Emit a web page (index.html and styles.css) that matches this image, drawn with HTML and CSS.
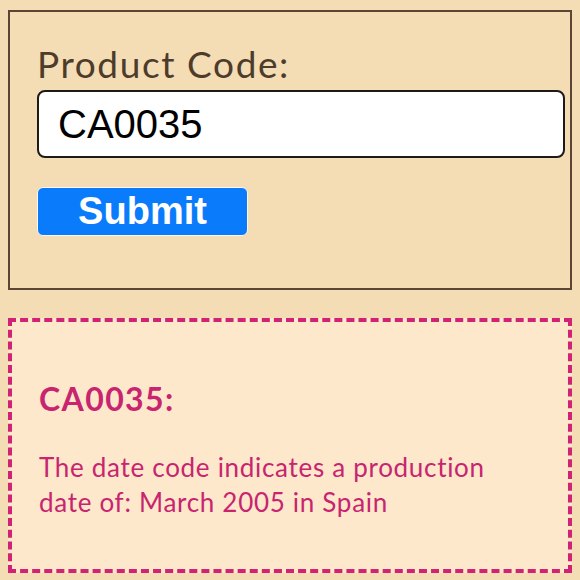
FILE: index.html
```html
<!DOCTYPE html>
<html lang="en">
<head>
<meta charset="UTF-8">
<meta name="viewport" content="width=device-width, initial-scale=1.0">
<title>Date Code Lookup</title>
<link rel="stylesheet" href="styles.css">
</head>
<body>

<form class="lookup" onsubmit="return false;">
    <label class="etichetta" for="codice">Product Code:</label>
    <input id="codice" class="casella" type="text" value="CA0035">
    <button class="invia" type="submit">Submit</button>
</form>

<div class="risultato">
    <h2 class="codice-titolo">CA0035:</h2>
    <p class="messaggio">The date code indicates a production date of: March 2005 in Spain</p>
</div>

</body>
</html>
```

FILE: styles.css
```css
body{margin: 0;
    padding: 10px 8px 0 8px;
    background-color: #f4dcb4;
    font-family: Lato, "Open Sans", sans-serif;}

.lookup{display: flex;
        flex-direction: column;
        align-items: flex-start;
        border: 2px solid #5b4636;
        padding: 30px 5px 52px 27px;}

.etichetta{font-size: 37px;
           line-height: 44px;
           letter-spacing: 1.6px;
           color: #4d3b2b;
           margin-bottom: 4px;}

.casella{box-sizing: border-box;
         width: 100%;
         height: 68px;
         padding: 0 19px;
         border: 2px solid #1e1a17;
         border-radius: 8px;
         background-color: #fff;
         color: #000;
         font-family: "Liberation Sans", Arial, sans-serif;
         font-size: 40px;}

.casella:focus{outline: none;}

.invia{box-sizing: border-box;
       width: 211px;
       height: 49px;
       margin-top: 29px;
       padding: 0;
       border: 1px solid #fdf6ec;
       border-radius: 6px;
       background-color: #0a7cfb;
       color: #fff;
       font-family: "Liberation Sans", Arial, sans-serif;
       font-weight: bold;
       font-size: 38px;
       line-height: 47px;
       cursor: pointer;}

.risultato{margin-top: 28px;
           height: 255px;
           box-sizing: border-box;
           border: 4px dashed #d02374;
           background-color: #fde8cc;
           padding: 58px 27px 0 27px;
           color: #c8246f;}

.codice-titolo{margin: 0;
               font-size: 32px;
               line-height: 38px;
               letter-spacing: 1.4px;
               font-weight: bold;}

.messaggio{margin: 32px 0 0 0;
           font-size: 26px;
           line-height: 35px;
           letter-spacing: 0.7px;}
```
